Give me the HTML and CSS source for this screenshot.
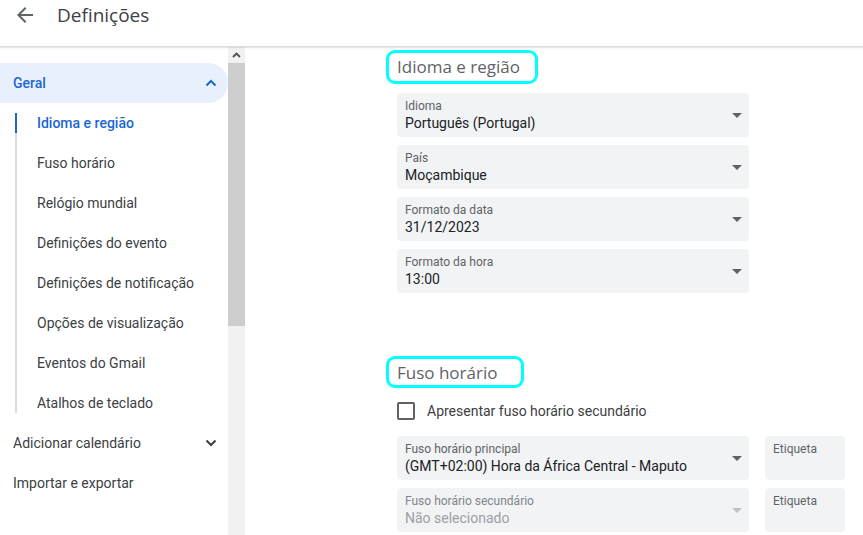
FILE: index.html
```html
<!DOCTYPE html>
<html lang="pt">
<head>
<meta charset="utf-8">
<title>Definições</title>
<link rel="stylesheet" href="styles.css">
</head>
<body>
<header class="topbar">
  <button class="back" aria-label="Voltar">
    <svg width="24" height="24" viewBox="0 0 24 24"><path d="M20 11H7.83l5.59-5.59L12 4l-8 8 8 8 1.41-1.41L7.83 13H20v-2z" fill="#5f6368"/></svg>
  </button>
  <h1 class="title">Definições</h1>
</header>
<div class="layout">
  <nav class="sidebar">
    <div class="nav-group open">
      <span>Geral</span>
      <svg class="chev" width="12" height="8" viewBox="0 0 12 8"><path d="M1.5 6.5 6 2l4.5 4.5" fill="none" stroke="#1967d2" stroke-width="2"/></svg>
    </div>
    <ul class="subnav">
      <li class="active">Idioma e região</li>
      <li>Fuso horário</li>
      <li>Relógio mundial</li>
      <li>Definições do evento</li>
      <li>Definições de notificação</li>
      <li>Opções de visualização</li>
      <li>Eventos do Gmail</li>
      <li>Atalhos de teclado</li>
    </ul>
    <div class="nav-group second">
      <span>Adicionar calendário</span>
      <svg class="chev" width="12" height="8" viewBox="0 0 12 8"><path d="M1.5 1.5 6 6l4.5-4.5" fill="none" stroke="#3c4043" stroke-width="2"/></svg>
    </div>
    <div class="nav-group">
      <span>Importar e exportar</span>
    </div>
  </nav>
  <div class="scrollbar">
    <div class="sb-btn">
      <svg width="9" height="6" viewBox="0 0 9 6"><path d="M1 5 4.5 1.5 8 5" fill="none" stroke="#505050" stroke-width="1.8"/></svg>
    </div>
    <div class="sb-thumb"></div>
  </div>
  <main class="content">
    <section class="section">
      <h2 class="sec-title"><span class="mark">Idioma e região</span></h2>
      <div class="field">
        <div class="select"><div class="label">Idioma</div><div class="value">Português (Portugal)</div><span class="caret"></span></div>
      </div>
      <div class="field">
        <div class="select"><div class="label">País</div><div class="value">Moçambique</div><span class="caret"></span></div>
      </div>
      <div class="field">
        <div class="select"><div class="label">Formato da data</div><div class="value">31/12/2023</div><span class="caret"></span></div>
      </div>
      <div class="field">
        <div class="select"><div class="label">Formato da hora</div><div class="value">13:00</div><span class="caret"></span></div>
      </div>
    </section>
    <section class="section tz">
      <h2 class="sec-title"><span class="mark small">Fuso horário</span></h2>
      <label class="check"><span class="box"></span>Apresentar fuso horário secundário</label>
      <div class="field row">
        <div class="select"><div class="label">Fuso horário principal</div><div class="value">(GMT+02:00) Hora da África Central - Maputo</div><span class="caret"></span></div>
        <div class="tag">Etiqueta</div>
      </div>
      <div class="field row">
        <div class="select disabled"><div class="label">Fuso horário secundário</div><div class="value">Não selecionado</div><span class="caret"></span></div>
        <div class="tag">Etiqueta</div>
      </div>
    </section>
  </main>
</div>
</body>
</html>
```
FILE: styles.css
```css
* { box-sizing: border-box; }
html, body { margin: 0; height: 100%; overflow: hidden; }
body {
  font-family: Roboto, "Liberation Sans", Arial, sans-serif;
  color: #3c4043;
  background: #fff;
}
.topbar {
  height: 47px;
  display: flex;
  align-items: flex-start;
  border-bottom: 1px solid #dadce0;
  box-shadow: 0 1px 1px rgba(60,64,67,0.12);
  position: relative;
  z-index: 1;
}
.back {
  border: 0;
  background: none;
  padding: 0;
  margin: 3px 0 0 13px;
  width: 24px;
  height: 24px;
  display: flex;
}
.title {
  margin: 0 0 0 20px;
  font-family: "Open Sans", Roboto, sans-serif;
  font-weight: 400;
  font-size: 19px;
  line-height: 30px;
  color: #3c4043;
}
.layout {
  display: flex;
  height: 488px;
}
.sidebar {
  width: 228px;
  flex: none;
  padding-top: 16px;
  font-size: 14px;
}
.nav-group {
  height: 40px;
  display: flex;
  align-items: center;
  justify-content: space-between;
  padding: 0 11px 0 13px;
}
.nav-group.open {
  background: #e8f0fe;
  border-radius: 0 20px 20px 0;
  color: #1967d2;
  font-weight: 500;
}
.nav-group.second { margin-top: 10px; }
.subnav {
  list-style: none;
  margin: 10px 0 0 15px;
  padding: 0;
  border-left: 2px solid #dadce0;
}
.subnav li {
  height: 20px;
  line-height: 20px;
  padding-left: 20px;
  margin-bottom: 20px;
}
.subnav li:last-child { margin-bottom: 0; }
.subnav li.active {
  margin-left: -2px;
  padding-left: 20px;
  border-left: 2px solid #1967d2;
  color: #1967d2;
  font-weight: 500;
}
.scrollbar {
  width: 17px;
  flex: none;
  background: #f1f1f1;
  display: flex;
  flex-direction: column;
}
.sb-btn {
  height: 16px;
  display: flex;
  align-items: center;
  justify-content: center;
}
.sb-thumb {
  height: 263px;
  background: #cdcdcd;
}
.content {
  flex: 1;
  padding-left: 152px;
}
.sec-title {
  margin: 0;
  font-family: "Open Sans", Roboto, sans-serif;
  font-weight: 400;
  font-size: 17px;
  color: #5f6368;
}
.mark {
  display: inline-block;
  margin: 3px 0 0 -11px;
  width: 152px;
  height: 34px;
  line-height: 28px;
  padding-left: 8px;
  border: 3px solid #00ffff;
  border-radius: 9px;
}
.mark.small { width: 138px; height: 32px; line-height: 27px; }
.section .field { margin-top: 8px; }
.section .sec-title + .field { margin-top: 9px; }
.select {
  position: relative;
  width: 352px;
  height: 44px;
  background: #f1f3f4;
  border-radius: 4px;
  padding: 5px 8px 0;
}
.label {
  font-size: 12px;
  line-height: 16px;
  color: #5f6368;
}
.value {
  font-size: 14px;
  line-height: 19px;
  color: #202124;
}
.caret {
  position: absolute;
  right: 7px;
  top: 20px;
  border-left: 5px solid transparent;
  border-right: 5px solid transparent;
  border-top: 5px solid #5f6368;
}
.select.disabled .label { color: #80868b; }
.select.disabled .value { color: #9aa0a6; }
.select.disabled .caret { border-top-color: #bdc1c6; }
.tz { margin-top: 60px; }
.check {
  display: flex;
  align-items: center;
  margin-top: 14px;
  font-size: 14px;
  line-height: 18px;
  color: #3c4043;
}
.box {
  width: 18px;
  height: 18px;
  border: 2px solid #5f6368;
  border-radius: 2px;
  margin-right: 12px;
}
.tz .check + .field { margin-top: 16px; }
.row { display: flex; gap: 16px; }
.tag {
  width: 80px;
  height: 44px;
  background: #f1f3f4;
  border-radius: 4px;
  padding: 5px 8px 0;
  font-size: 12px;
  line-height: 16px;
  color: #5f6368;
}
```
